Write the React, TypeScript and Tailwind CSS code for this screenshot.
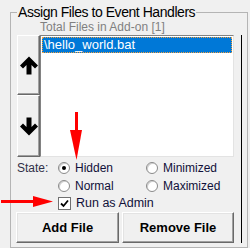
import React from 'react';

const Arrow: React.FC<{ down?: boolean }> = ({ down }) => (
  <svg width="20" height="19" viewBox="0 0 20 19" className={down ? 'rotate-180' : ''}>
    <polygon points="10,0.5 19,9.5 16,12.5 12.5,9 12.5,18.5 7.5,18.5 7.5,9 4,12.5 1,9.5" fill="#000" />
  </svg>
);

const Radio: React.FC<{ checked?: boolean; label: string }> = ({ checked, label }) => (
  <div className="flex items-center gap-[5px]">
    <div className="w-[12px] h-[12px] rounded-full border border-[#8a8a8a] bg-white flex items-center justify-center shadow-[inset_1px_1px_0_#d0d0d0]">
      {checked && <div className="w-[4px] h-[4px] rounded-full bg-black" />}
    </div>
    <span className="text-[12px] leading-[16px] text-[#10103a]">{label}</span>
  </div>
);

const App: React.FC = () => {
  return (
    <div className="relative w-[250px] h-[248px] overflow-hidden bg-[#f0f0f0] pt-[4px] pl-[10px] font-['Liberation_Sans',Arial,sans-serif]">
      <fieldset className="w-[238px] h-[244px] border border-[#b4b4b4] pl-[6px] flex">
        <legend className="px-[1px] text-[14px] leading-[16px] tracking-[-0.45px] text-black">
          Assign Files to Event Handlers
        </legend>
        <div className="flex w-full">
          <div className="w-[217px] flex flex-col">
            <div className="h-[15px] pl-[23px] text-[12px] leading-[15px] text-[#808080]">
              Total Files in Add-on [1]
            </div>
            <div className="flex h-[122px]">
              <div className="w-[23px] flex flex-col">
                <button className="h-[60px] flex items-center justify-center bg-[#f0f0f0] border border-t-white border-l-white border-r-[#696969] border-b-[#696969] shadow-[inset_-1px_-1px_0_#a0a0a0]">
                  <Arrow />
                </button>
                <button className="h-[62px] flex items-center justify-center bg-[#f0f0f0] border border-t-white border-l-white border-r-[#696969] border-b-[#696969] shadow-[inset_-1px_-1px_0_#a0a0a0]">
                  <Arrow down />
                </button>
              </div>
              <div className="flex-1 bg-white border border-t-[#828282] border-l-[#828282] border-r-[#e3e3e3] border-b-[#e3e3e3] p-[1px]">
                <div className="h-[16px] bg-[#0078d7] border border-dotted border-[#f0a040] text-white text-[13px] leading-[14px] pl-[1px]">
                  \hello_world.bat
                </div>
              </div>
            </div>
            <div className="mt-[3px] flex items-center h-[16px]">
              <span className="w-[41px] text-[12px] leading-[16px] text-[#303048]">State:</span>
              <div className="w-[88px]"><Radio checked label="Hidden" /></div>
              <Radio label="Minimized" />
            </div>
            <div className="mt-[2px] flex items-center h-[16px] pl-[41px]">
              <div className="w-[88px]"><Radio label="Normal" /></div>
              <Radio label="Maximized" />
            </div>
            <div className="mt-[1px] flex items-center h-[16px] pl-[41px] gap-[5px]">
              <div className="w-[13px] h-[13px] border border-[#707070] bg-white flex items-center justify-center">
                <svg width="9" height="9" viewBox="0 0 9 9">
                  <polyline points="1,4.5 3.5,7 8,1.5" fill="none" stroke="#000" strokeWidth="1.8" />
                </svg>
              </div>
              <span className="text-[12.5px] leading-[16px] text-[#10103a]">Run as Admin</span>
            </div>
            <div className="mt-[1px] -ml-[1px] flex gap-[3px] h-[31px]">
              <button className="w-[104px] bg-[#f0f0f0] border border-t-white border-l-white border-r-[#696969] border-b-[#696969] shadow-[inset_-1px_-1px_0_#a0a0a0,inset_1px_1px_0_#e3e3e3] text-[13px] font-bold text-black">
                Add File
              </button>
              <button className="w-[113px] bg-[#f0f0f0] border border-t-white border-l-white border-r-[#696969] border-b-[#696969] shadow-[inset_-1px_-1px_0_#a0a0a0,inset_1px_1px_0_#e3e3e3] text-[13px] font-bold text-black">
                Remove File
              </button>
            </div>
          </div>
          <div className="ml-[7px] w-px bg-black mt-[15px] mb-[4px]" />
        </div>
      </fieldset>

      {/* red annotation arrows */}
      <svg className="absolute inset-0 pointer-events-none" width="250" height="248">
        <rect x="75" y="112" width="3" height="20" fill="#ff0000" />
        <polygon points="70,130 82,130 76.5,160" fill="#ff0000" />
        <rect x="1" y="200" width="34" height="3" fill="#ff0000" />
        <polygon points="33,196 33,207 53,201.5" fill="#ff0000" />
      </svg>
    </div>
  );
};

export default App;
